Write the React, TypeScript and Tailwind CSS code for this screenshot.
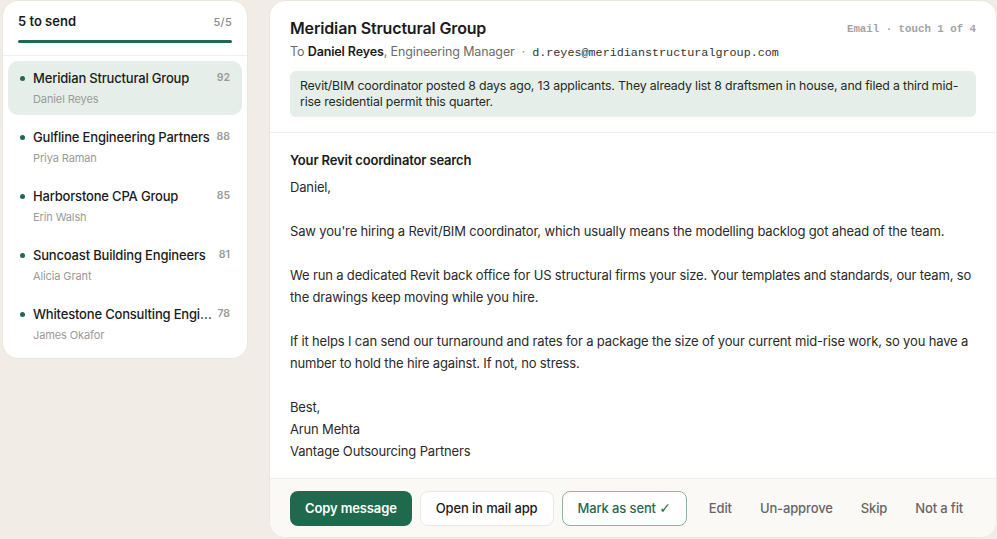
import { useState } from "react";

type Lead = {
  company: string;
  contact: string;
  score: number;
};

const leads: Lead[] = [
  { company: "Meridian Structural Group", contact: "Daniel Reyes", score: 92 },
  { company: "Gulfline Engineering Partners", contact: "Priya Raman", score: 88 },
  { company: "Harborstone CPA Group", contact: "Erin Walsh", score: 85 },
  { company: "Suncoast Building Engineers", contact: "Alicia Grant", score: 81 },
  { company: "Whitestone Consulting Engineers", contact: "James Okafor", score: 78 },
];

const body = [
  "Daniel,",
  "Saw you're hiring a Revit/BIM coordinator, which usually means the modelling backlog got ahead of the team.",
  "We run a dedicated Revit back office for US structural firms your size. Your templates and standards, our team, so the drawings keep moving while you hire.",
  "If it helps I can send our turnaround and rates for a package the size of your current mid-rise work, so you have a number to hold the hire against. If not, no stress.",
];

const sans = "font-['Inter','Liberation_Sans',sans-serif]";
const mono = "font-['Liberation_Mono','DejaVu_Sans_Mono',monospace]";

function Queue({ active, onPick }: { active: number; onPick: (i: number) => void }) {
  return (
    <div className="w-[246px] shrink-0 self-start rounded-2xl border border-[#ebe7df] bg-white">
      <div className="border-b border-[#f1efea] px-[15px] pt-[11px] pb-[12px]">
        <div className="flex items-center justify-between">
          <span className="text-[13px] font-semibold text-[#1b1b1b]">5 to send</span>
          <span className="text-[11px] font-medium tracking-wide text-[#8c8c8c]">5/5</span>
        </div>
        <div className="mt-[8px] h-[3px] rounded-full bg-[#1f6a4f]" />
      </div>
      <div className="flex flex-col px-[5px] pt-[5px] pb-[7px]">
        {leads.map((lead, i) => (
          <button
            key={lead.company}
            onClick={() => onPick(i)}
            className={`flex h-[54px] items-start gap-[8px] rounded-[10px] pr-[12px] pl-[12px] pt-[8px] text-left ${
              i === active ? "bg-[#e6eee9]" : ""
            } ${i > 0 ? "mt-[5px]" : ""}`}
          >
            <span className="mt-[7px] h-[5px] w-[5px] shrink-0 rounded-full bg-[#1f6a4f]" />
            <div className="min-w-0 flex-1">
              <div className="flex items-center justify-between gap-[5px]">
                <span className="truncate text-[13px] font-medium tracking-[-0.014em] text-[#1b1b1b]">{lead.company}</span>
                <span className="shrink-0 text-[10.5px] font-semibold text-[#9a9a9a]">{lead.score}</span>
              </div>
              <div className="mt-[3px] text-[11px] tracking-[-0.01em] text-[#9a9a9a]">{lead.contact}</div>
            </div>
          </button>
        ))}
      </div>
    </div>
  );
}

function Draft() {
  const [sent, setSent] = useState(false);

  return (
    <div className="flex min-w-0 flex-1 flex-col overflow-hidden rounded-2xl border border-[#ebe7df] bg-white">
      <div className="border-b border-[#f1efea] px-[20px] pt-[15px] pb-[15px]">
        <div className="flex items-start justify-between">
          <h1 className="text-[16px] font-semibold tracking-[-0.01em] text-[#1b1b1b]">Meridian Structural Group</h1>
          <span className={`${mono} mt-[5px] text-[10.75px] font-bold text-[#a3a3a3]`}>Email · touch 1 of 4</span>
        </div>
        <div className="mt-[3px] text-[12.5px] tracking-[-0.01em] text-[#6b6b6b]">
          To <span className="font-semibold text-[#1b1b1b]">Daniel Reyes</span>, Engineering Manager
          <span className="mx-[7px] text-[#9a9a9a]">·</span>
          <span className={`${mono} text-[11.75px] tracking-normal text-[#333]`}>d.reyes@meridianstructuralgroup.com</span>
        </div>
        <div className="mt-[8px] rounded-[6px] bg-[#e6eee9] px-[10px] py-[7px] text-[12.3px] leading-[16px] tracking-[-0.012em] text-[#1f2a24]">
          Revit/BIM coordinator posted 8 days ago, 13 applicants. They already list 8 draftsmen in house, and filed a third
          mid-rise residential permit this quarter.
        </div>
      </div>

      <div className="flex-1 px-[20px] pt-[16px] text-[13px] leading-[22px] tracking-[-0.012em] text-[#2a2a2a]">
        <div className="mb-[5px] font-semibold text-[#1b1b1b]">Your Revit coordinator search</div>
        {body.map((p) => (
          <p key={p} className="mb-[22px]">
            {p}
          </p>
        ))}
        <p>Best,</p>
        <p>Arun Mehta</p>
        <p>Vantage Outsourcing Partners</p>
      </div>

      <div className="flex items-center gap-[8px] border-t border-[#efece6] bg-[#faf9f6] px-[20px] pt-[12px] pb-[11px] whitespace-nowrap">
        <button className="h-[35px] rounded-[8px] bg-[#1f6a4f] px-[15px] text-[13px] font-semibold tracking-[-0.01em] text-white">
          Copy message
        </button>
        <button className="h-[35px] rounded-[8px] border border-[#ebe8e2] bg-white px-[15px] text-[13px] font-medium tracking-[-0.01em] text-[#1b1b1b]">
          Open in mail app
        </button>
        <button
          onClick={() => setSent(!sent)}
          className="h-[35px] rounded-[8px] border border-[#8db3a1] bg-white px-[15px] text-[13px] font-medium tracking-[-0.01em] text-[#1f6a4f]"
        >
          Mark as sent <span className="font-['DejaVu_Sans',sans-serif] text-[14px]">✓</span>
        </button>
        <div className="ml-[14px] flex items-center gap-[28px] text-[13px] font-medium tracking-[-0.01em] text-[#666666]">
          <button>Edit</button>
          <button>Un-approve</button>
          <button>Skip</button>
          <button>Not a fit</button>
        </div>
      </div>
    </div>
  );
}

export default function App() {
  const [active, setActive] = useState(0);

  return (
    <div className={`${sans} flex h-[539px] gap-[21px] overflow-hidden bg-[#f1ede6] pb-[1px] pl-[2px] antialiased`}>
      <Queue active={active} onPick={setActive} />
      <Draft />
    </div>
  );
}
